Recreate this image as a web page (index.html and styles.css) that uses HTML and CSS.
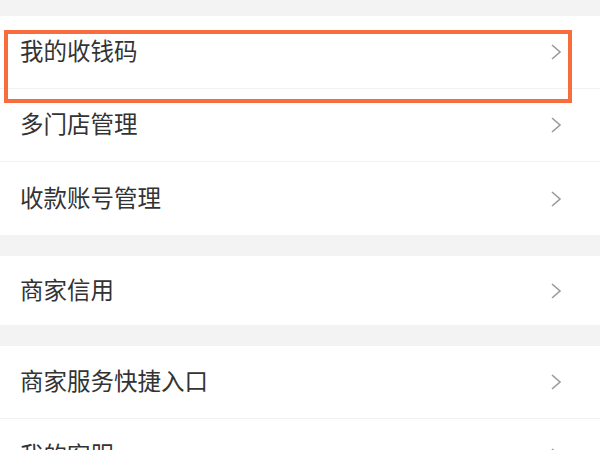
FILE: index.html
```html
<!DOCTYPE html>
<html lang="zh-CN">
<head>
<meta charset="utf-8">
<link rel="stylesheet" href="styles.css">
</head>
<body>
<div class="page">
  <div class="band band-top"></div>
  <div class="section">
    <div class="row"><span class="label">我的收钱码</span><svg class="chev" viewBox="0 0 12 18"><polyline points="2,2 10,9 2,16"/></svg></div>
    <div class="row"><span class="label">多门店管理</span><svg class="chev" viewBox="0 0 12 18"><polyline points="2,2 10,9 2,16"/></svg></div>
    <div class="row row-last"><span class="label">收款账号管理</span><svg class="chev" viewBox="0 0 12 18"><polyline points="2,2 10,9 2,16"/></svg></div>
  </div>
  <div class="band"></div>
  <div class="section">
    <div class="row row-short row-last"><span class="label">商家信用</span><svg class="chev" viewBox="0 0 12 18"><polyline points="2,2 10,9 2,16"/></svg></div>
  </div>
  <div class="band"></div>
  <div class="section">
    <div class="row"><span class="label">商家服务快捷入口</span><svg class="chev" viewBox="0 0 12 18"><polyline points="2,2 10,9 2,16"/></svg></div>
    <div class="row row-last"><span class="label">我的客服</span><svg class="chev" viewBox="0 0 12 18"><polyline points="2,2 10,9 2,16"/></svg></div>
  </div>
  <div class="highlight"></div>
</div>
</body>
</html>
```
FILE: styles.css
```css
html, body {
  margin: 0;
  padding: 0;
  background: #ffffff;
}
.page {
  position: relative;
  width: 600px;
  height: 450px;
  overflow: hidden;
  font-family: "Noto Sans CJK SC", "Noto Sans", sans-serif;
  color: #333333;
}
.band {
  height: 21px;
  background: #f3f3f3;
}
.band-top {
  height: 16px;
}
.section {
  background: #ffffff;
}
.row {
  height: 73px;
  display: flex;
  align-items: center;
  justify-content: space-between;
  padding: 0 38px 0 20px;
  box-sizing: border-box;
  border-bottom: 1px solid #f1f1f1;
  margin-left: 0;
}
.row-last {
  border-bottom: none;
}
.row-short {
  height: 69px;
}
.label {
  font-size: 23.5px;
  line-height: 1;
  margin-top: -2px;
}
.chev {
  width: 12px;
  height: 18px;
  fill: none;
  stroke: #9a9a9a;
  stroke-width: 1.6;
}
.highlight {
  position: absolute;
  left: 4px;
  top: 30px;
  width: 568px;
  height: 73px;
  box-sizing: border-box;
  border: 4px solid #f86d3e;
}
```
